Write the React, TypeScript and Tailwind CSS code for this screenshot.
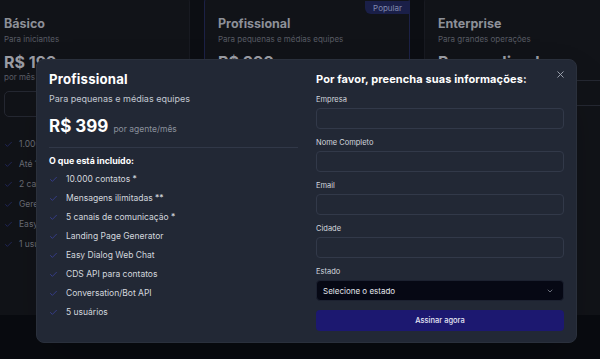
import { Check, ChevronDown, X } from 'lucide-react'

const body = { fontFamily: 'Inter, "Liberation Sans", sans-serif' }

type Plan = {
  name: string
  desc: string
  price: string
  note?: string
  popular?: boolean
  features: string[]
}

const plans: Plan[] = [
  {
    name: 'Básico',
    desc: 'Para iniciantes',
    price: 'R$ 199',
    note: 'por mês',
    features: ['1.000 contatos *', 'Até 1.000 mensagens', '2 canais de comunicação', 'Gerenciador de tickets', 'Easy Dialog Web Chat', '1 usuário'],
  },
  {
    name: 'Profissional',
    desc: 'Para pequenas e médias equipes',
    price: 'R$ 399',
    popular: true,
    features: [],
  },
  {
    name: 'Enterprise',
    desc: 'Para grandes operações',
    price: 'Personalizado',
    features: [],
  },
]

const included = [
  '10.000 contatos *',
  'Mensagens ilimitadas **',
  '5 canais de comunicação *',
  'Landing Page Generator',
  'Easy Dialog Web Chat',
  'CDS API para contatos',
  'Conversation/Bot API',
  '5 usuários',
]

const fields = ['Empresa', 'Nome Completo', 'Email', 'Cidade']

function PlanCard({ plan, width }: { plan: Plan; width: string }) {
  return (
    <div
      className={`relative shrink-0 ${width} h-[330px] -mt-[6px] rounded-[8px] border bg-[#111318] px-[13px] pt-[20px] ${
        plan.popular ? 'border-[#1c2146]' : 'border-[#181a21]'
      }`}
    >
      {plan.popular && (
        <div className="absolute right-[-1px] top-[6px] rounded-bl-[6px] bg-[#1a1f48] px-[8px] h-[13px] flex items-center text-[8px] text-[#8088ad]">
          Popular
        </div>
      )}
      <div className="text-[12.5px] font-bold leading-[18px] text-[#8d9098]">{plan.name}</div>
      <div className="text-[8px] leading-[12px] text-[#585b64]">{plan.desc}</div>
      <div className="mt-[7px] text-[16px] font-bold leading-[20px] text-[#9a9ca3]">{plan.price}</div>
      {plan.note && <div className="text-[8px] leading-[11px] text-[#5b5e67]">{plan.note}</div>}
      <div className="mt-[8px] h-[26px] rounded-[5px] border border-[#252832]" />
      <div className="mt-[17px] flex flex-col">
        {plan.features.map((f) => (
          <div key={f} className="flex h-[20px] items-center gap-[6px] text-[8.5px] text-[#6b6e77]">
            <Check className="h-[9px] w-[9px] text-[#262c6a]" strokeWidth={2} />
            <span>{f}</span>
          </div>
        ))}
      </div>
    </div>
  )
}

export default function App() {
  return (
    <div className="relative h-[359px] w-[600px] overflow-hidden bg-[#090b10]" style={body}>
      <div className="flex h-[315px] gap-[14px] overflow-hidden bg-[#0c0e13] -ml-[10px]">
        <PlanCard plan={plans[0]} width="w-[200px]" />
        <PlanCard plan={plans[1]} width="w-[206px]" />
        <PlanCard plan={plans[2]} width="w-[200px]" />
      </div>

      <div className="absolute left-[36px] top-[59px] h-[284px] w-[541px] rounded-[8px] border border-[#2a303c] bg-[#222835] shadow-2xl">
        <button className="absolute right-[10px] top-[9px] text-[#a3a9b5]">
          <X className="h-[11px] w-[11px]" strokeWidth={2} />
        </button>
        <div className="grid grid-cols-[249px_248px] gap-x-[18px] px-[12px] pt-[9px]">
          <div className="flex flex-col">
            <div className="text-[13.2px] font-bold leading-[20px] text-white tracking-[0.2px]">Profissional</div>
            <div className="mt-[3px] text-[9px] leading-[14px] text-[#c3c8d2]">Para pequenas e médias equipes</div>
            <div className="mt-[8px] flex items-baseline gap-[5px] leading-[24px]">
              <span className="text-[17px] font-bold text-white">R$ 399</span>
              <span className="text-[8.5px] text-[#8a909c]">por agente/mês</span>
            </div>
            <div className="mt-[6px] border-t border-[#313848]" />
            <div className="mt-[6px] text-[8.8px] font-bold leading-[14px] text-white">O que está incluído:</div>
            <ul className="mt-[2px] flex flex-col">
              {included.map((f) => (
                <li key={f} className="flex h-[19px] items-center gap-[8px] text-[8.5px] text-[#d3d7de]">
                  <Check className="h-[9px] w-[9px] text-[#3b41a0]" strokeWidth={2} />
                  <span>{f}</span>
                </li>
              ))}
            </ul>
          </div>

          <div className="flex flex-col">
            <div className="text-[11px] font-bold leading-[20px] text-white tracking-[0.1px]">Por favor, preencha suas informações:</div>
            <div className="mt-[5px] flex flex-col gap-[8px]">
              {fields.map((f) => (
                <label key={f} className="flex flex-col gap-[2px]">
                  <span className="text-[7.5px] leading-[12px] text-[#d3d7de]">{f}</span>
                  <input className="h-[21px] rounded-[4px] border border-[#323949] bg-[#222835] outline-none" />
                </label>
              ))}
              <label className="flex flex-col gap-[2px]">
                <span className="text-[7.5px] leading-[12px] text-[#d3d7de]">Estado</span>
                <div className="flex h-[21px] items-center justify-between rounded-[4px] border border-[#1c2130] bg-[#060814] pl-[6px] pr-[9px]">
                  <span className="text-[8px] text-[#e3e6ec]">Selecione o estado</span>
                  <ChevronDown className="h-[8px] w-[8px] text-[#9aa0ac]" strokeWidth={2} />
                </div>
              </label>
            </div>
            <button className="mt-[9px] h-[21px] rounded-[4px] bg-[#1c1870] text-[7.5px] font-medium text-[#e6e6f5]">
              Assinar agora
            </button>
          </div>
        </div>
      </div>
    </div>
  )
}
